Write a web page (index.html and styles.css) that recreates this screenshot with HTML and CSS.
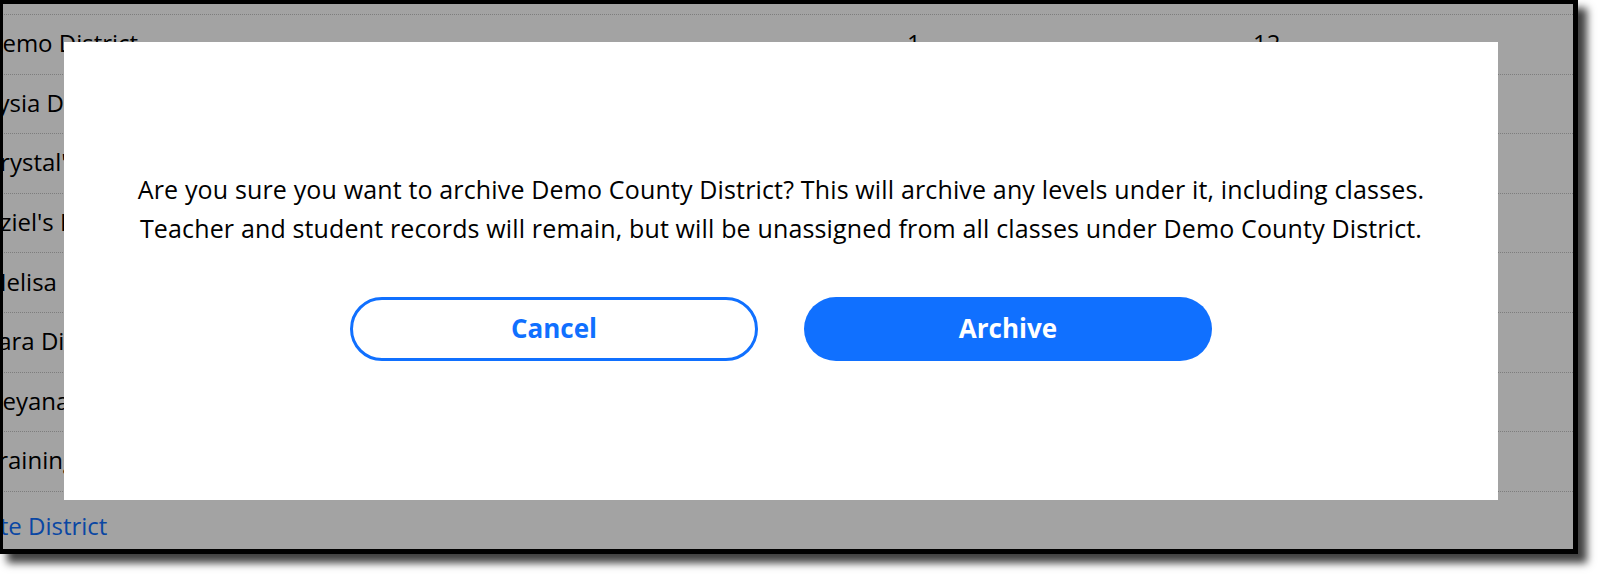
FILE: index.html
```html
<!DOCTYPE html>
<html lang="en">
<head>
<meta charset="utf-8">
<title>Districts</title>
<link rel="stylesheet" href="styles.css">
</head>
<body>
<div class="frame">
  <div class="screen">
    <div class="page">
      <div class="table">
        <div class="row"><span class="name">Demo District</span><span class="num">1</span><span class="num">12</span></div>
        <div class="row"><span class="name">Lysia District</span><span class="num">1</span><span class="num">4</span></div>
        <div class="row"><span class="name">Crystal's District</span><span class="num">2</span><span class="num">6</span></div>
        <div class="row"><span class="name">Aziel's District</span><span class="num">1</span><span class="num">3</span></div>
        <div class="row"><span class="name">Melisa District</span><span class="num">1</span><span class="num">5</span></div>
        <div class="row"><span class="name">Sara District</span><span class="num">1</span><span class="num">2</span></div>
        <div class="row"><span class="name">Deyana District</span><span class="num">1</span><span class="num">7</span></div>
        <div class="row"><span class="name">Training District</span><span class="num">3</span><span class="num">9</span></div>
      </div>
      <a class="create-link" href="#">Create District</a>
    </div>
    <div class="backdrop"></div>
    <div class="modal" role="dialog" aria-modal="true">
      <p class="modal-text">Are you sure you want to archive Demo County District? This will archive any levels under it, including classes.<br>Teacher and student records will remain, but will be unassigned from all classes under Demo County District.</p>
      <div class="modal-actions">
        <button class="btn btn-outline" type="button">Cancel</button>
        <button class="btn btn-primary" type="button">Archive</button>
      </div>
    </div>
  </div>
</div>
</body>
</html>
```

FILE: styles.css
```css
html,
body {
  margin: 0;
  background: #fff;
}

body {
  width: 1598px;
  height: 574px;
  overflow: hidden;
  font-family: "Open Sans", "Noto Sans", "Liberation Sans", sans-serif;
}

/* window frame with its drop shadow */
.frame {
  box-sizing: border-box;
  width: 1580px;
  height: 555px;
  margin: -1px 0 0 -2px;
  border: 5px solid #000;
  box-shadow: 9px 9px 8px rgba(0, 0, 0, 0.75);
}

.screen {
  position: relative;
  width: 100%;
  height: 100%;
  overflow: hidden;
  background: #fff;
}

/* district list behind the dialog */
.page {
  margin-left: -18px;
  padding-top: 10px;
  font-size: 24px;
  color: #000;
}

.table {
  border-bottom: 1px dotted #c4c4c4;
}

.row {
  box-sizing: border-box;
  display: grid;
  grid-template-columns: 922px 346px 1fr;
  align-items: center;
  height: 59.6px;
  padding-bottom: 3px;
  border-top: 1px dotted #c4c4c4;
  white-space: nowrap;
}

.create-link {
  display: block;
  margin: 19px 0 0 -37px;
  line-height: 30px;
  color: #1070ff;
  text-decoration: none;
}

.backdrop {
  position: absolute;
  inset: 0;
  background: rgba(0, 0, 0, 0.36);
}

/* confirmation dialog */
.modal {
  position: absolute;
  left: 61px;
  top: 38px;
  box-sizing: border-box;
  width: 1434px;
  height: 458px;
  padding-top: 128px;
  display: flex;
  flex-direction: column;
  align-items: center;
  background: #fff;
}

.modal-text {
  margin: 0;
  font-size: 25px;
  letter-spacing: 0.15px;
  line-height: 39px;
  text-align: center;
  white-space: nowrap;
  color: #000;
}

.modal-actions {
  display: flex;
  gap: 46px;
  margin-top: 49px;
}

.btn {
  box-sizing: border-box;
  width: 408px;
  height: 64px;
  padding: 0 0 3px;
  border-radius: 32px;
  font-family: "Open Sans", "Noto Sans", "Liberation Sans", sans-serif;
  font-size: 26px;
  font-weight: 700;
  cursor: pointer;
}

.btn-outline {
  background: #fff;
  border: 3px solid #1070ff;
  color: #1070ff;
}

.btn-primary {
  background: #1070ff;
  border: 0;
  color: #fff;
}
```
